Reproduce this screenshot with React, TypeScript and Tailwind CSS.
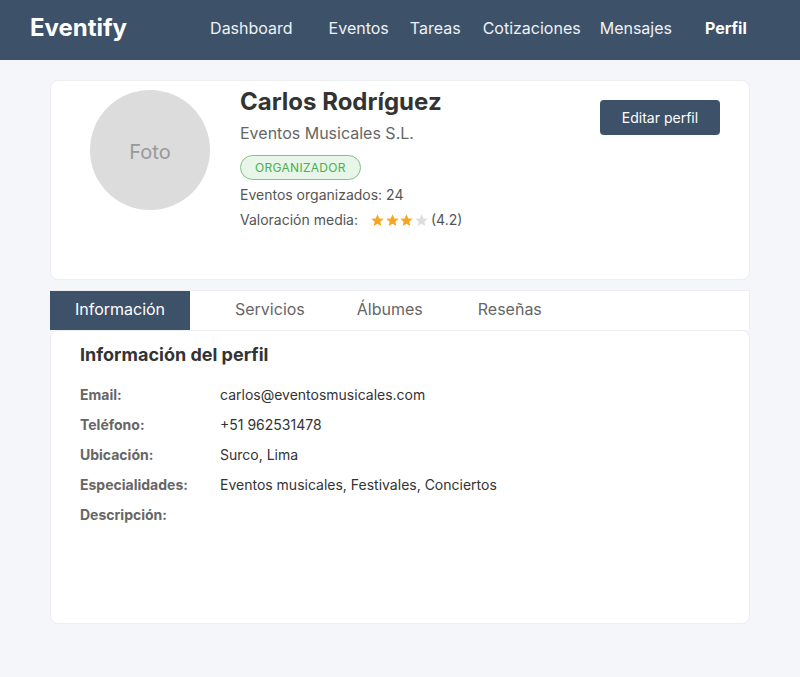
import React from "react";

function Star({ filled }: { filled: boolean }) {
  return (
    <svg width="13" height="13" viewBox="1.5 2 21 21" className="mr-[1.5px]">
      <path
        d="M12 2.5l2.9 6.6 7.1.6-5.4 4.7 1.6 7-6.2-3.7-6.2 3.7 1.6-7L2 9.7l7.1-.6z"
        fill={filled ? "#f5a623" : "#dddddd"}
      />
    </svg>
  );
}

export default function App() {
  const rows: [string, string][] = [
    ["Email:", "carlos@eventosmusicales.com"],
    ["Teléfono:", "+51 962531478"],
    ["Ubicación:", "Surco, Lima"],
    ["Especialidades:", "Eventos musicales, Festivales, Conciertos"],
    ["Descripción:", ""],
  ];
  return (
    <div className="min-h-[677px] bg-[#f5f6fa] font-['Inter',sans-serif]">
      <header className="h-[60px] bg-[#3d5169] flex items-center px-[30px] pb-[4px]">
        <div className="text-white text-[24px] font-bold">Eventify</div>
        <nav className="flex items-center text-[16px] text-[#eef1f5]">
          <span className="ml-[83px]">Dashboard</span>
          <span className="ml-[36px]">Eventos</span>
          <span className="ml-[21px]">Tareas</span>
          <span className="ml-[22px]">Cotizaciones</span>
          <span className="ml-[19px]">Mensajes</span>
          <span className="ml-[33px] font-bold text-white">Perfil</span>
        </nav>
      </header>

      <main className="px-[50px] pt-[20px] w-[800px]">
        <section className="bg-white rounded-[8px] border border-[#eceef2] h-[200px] flex pl-[39px] pr-[29px] pt-[9px]">
          <div className="w-[120px] h-[120px] rounded-full bg-[#dcdcdc] flex items-center justify-center text-[20px] text-[#999999] shrink-0 pt-[3px]">
            Foto
          </div>
          <div className="ml-[30px] flex-1 flex flex-col">
            <h1 className="text-[24px] font-bold text-[#333333] leading-[24px]">Carlos Rodríguez</h1>
            <div className="text-[16px] text-[#666666] mt-[9px] leading-[20px]">Eventos Musicales S.L.</div>
            <div className="mt-[12px] flex">
              <span className="inline-flex items-center h-[25px] px-[14px] rounded-full border border-[#7dc580] bg-[#e8f5e9] text-[12px] text-[#4caf50] tracking-[0.3px]">
                ORGANIZADOR
              </span>
            </div>
            <div className="text-[14px] text-[#555555] mt-[5px] leading-[20px]">Eventos organizados: 24</div>
            <div className="text-[14px] text-[#555555] mt-[5px] leading-[20px] flex items-center">
              <span>Valoración media:</span>
              <span className="ml-[13px] flex items-center">
                <Star filled />
                <Star filled />
                <Star filled />
                <Star filled={false} />
              </span>
              <span className="ml-[2px]">(4.2)</span>
            </div>
          </div>
          <div className="pt-[10px]">
            <button className="w-[120px] h-[35px] rounded-[4px] bg-[#3d5169] text-white text-[14px]">
              Editar perfil
            </button>
          </div>
        </section>

        <div className="mt-[10px] bg-white border-t border-r border-[#eceef2] h-[40px] flex items-stretch text-[16px] text-[#666666]">
          <div className="w-[140px] bg-[#3d5169] text-white flex items-center justify-center pb-[4px]">Información</div>
          <div className="ml-[45px] flex items-center pb-[4px]">Servicios</div>
          <div className="ml-[52px] flex items-center pb-[4px]">Álbumes</div>
          <div className="ml-[55px] flex items-center pb-[4px]">Reseñas</div>
        </div>

        <section className="bg-white rounded-[8px] border border-[#eceef2] h-[294px] px-[29px] pt-[12px]">
          <h2 className="text-[18px] font-bold text-[#333333] leading-[24px]">Información del perfil</h2>
          <div className="mt-[12px] flex flex-col">
            {rows.map(([k, v]) => (
              <div key={k} className="flex h-[30px] items-center text-[14px]">
                <div className="w-[140px] font-bold text-[#666666]">{k}</div>
                <div className="text-[#333333]">{v}</div>
              </div>
            ))}
          </div>
        </section>
      </main>
    </div>
  );
}
